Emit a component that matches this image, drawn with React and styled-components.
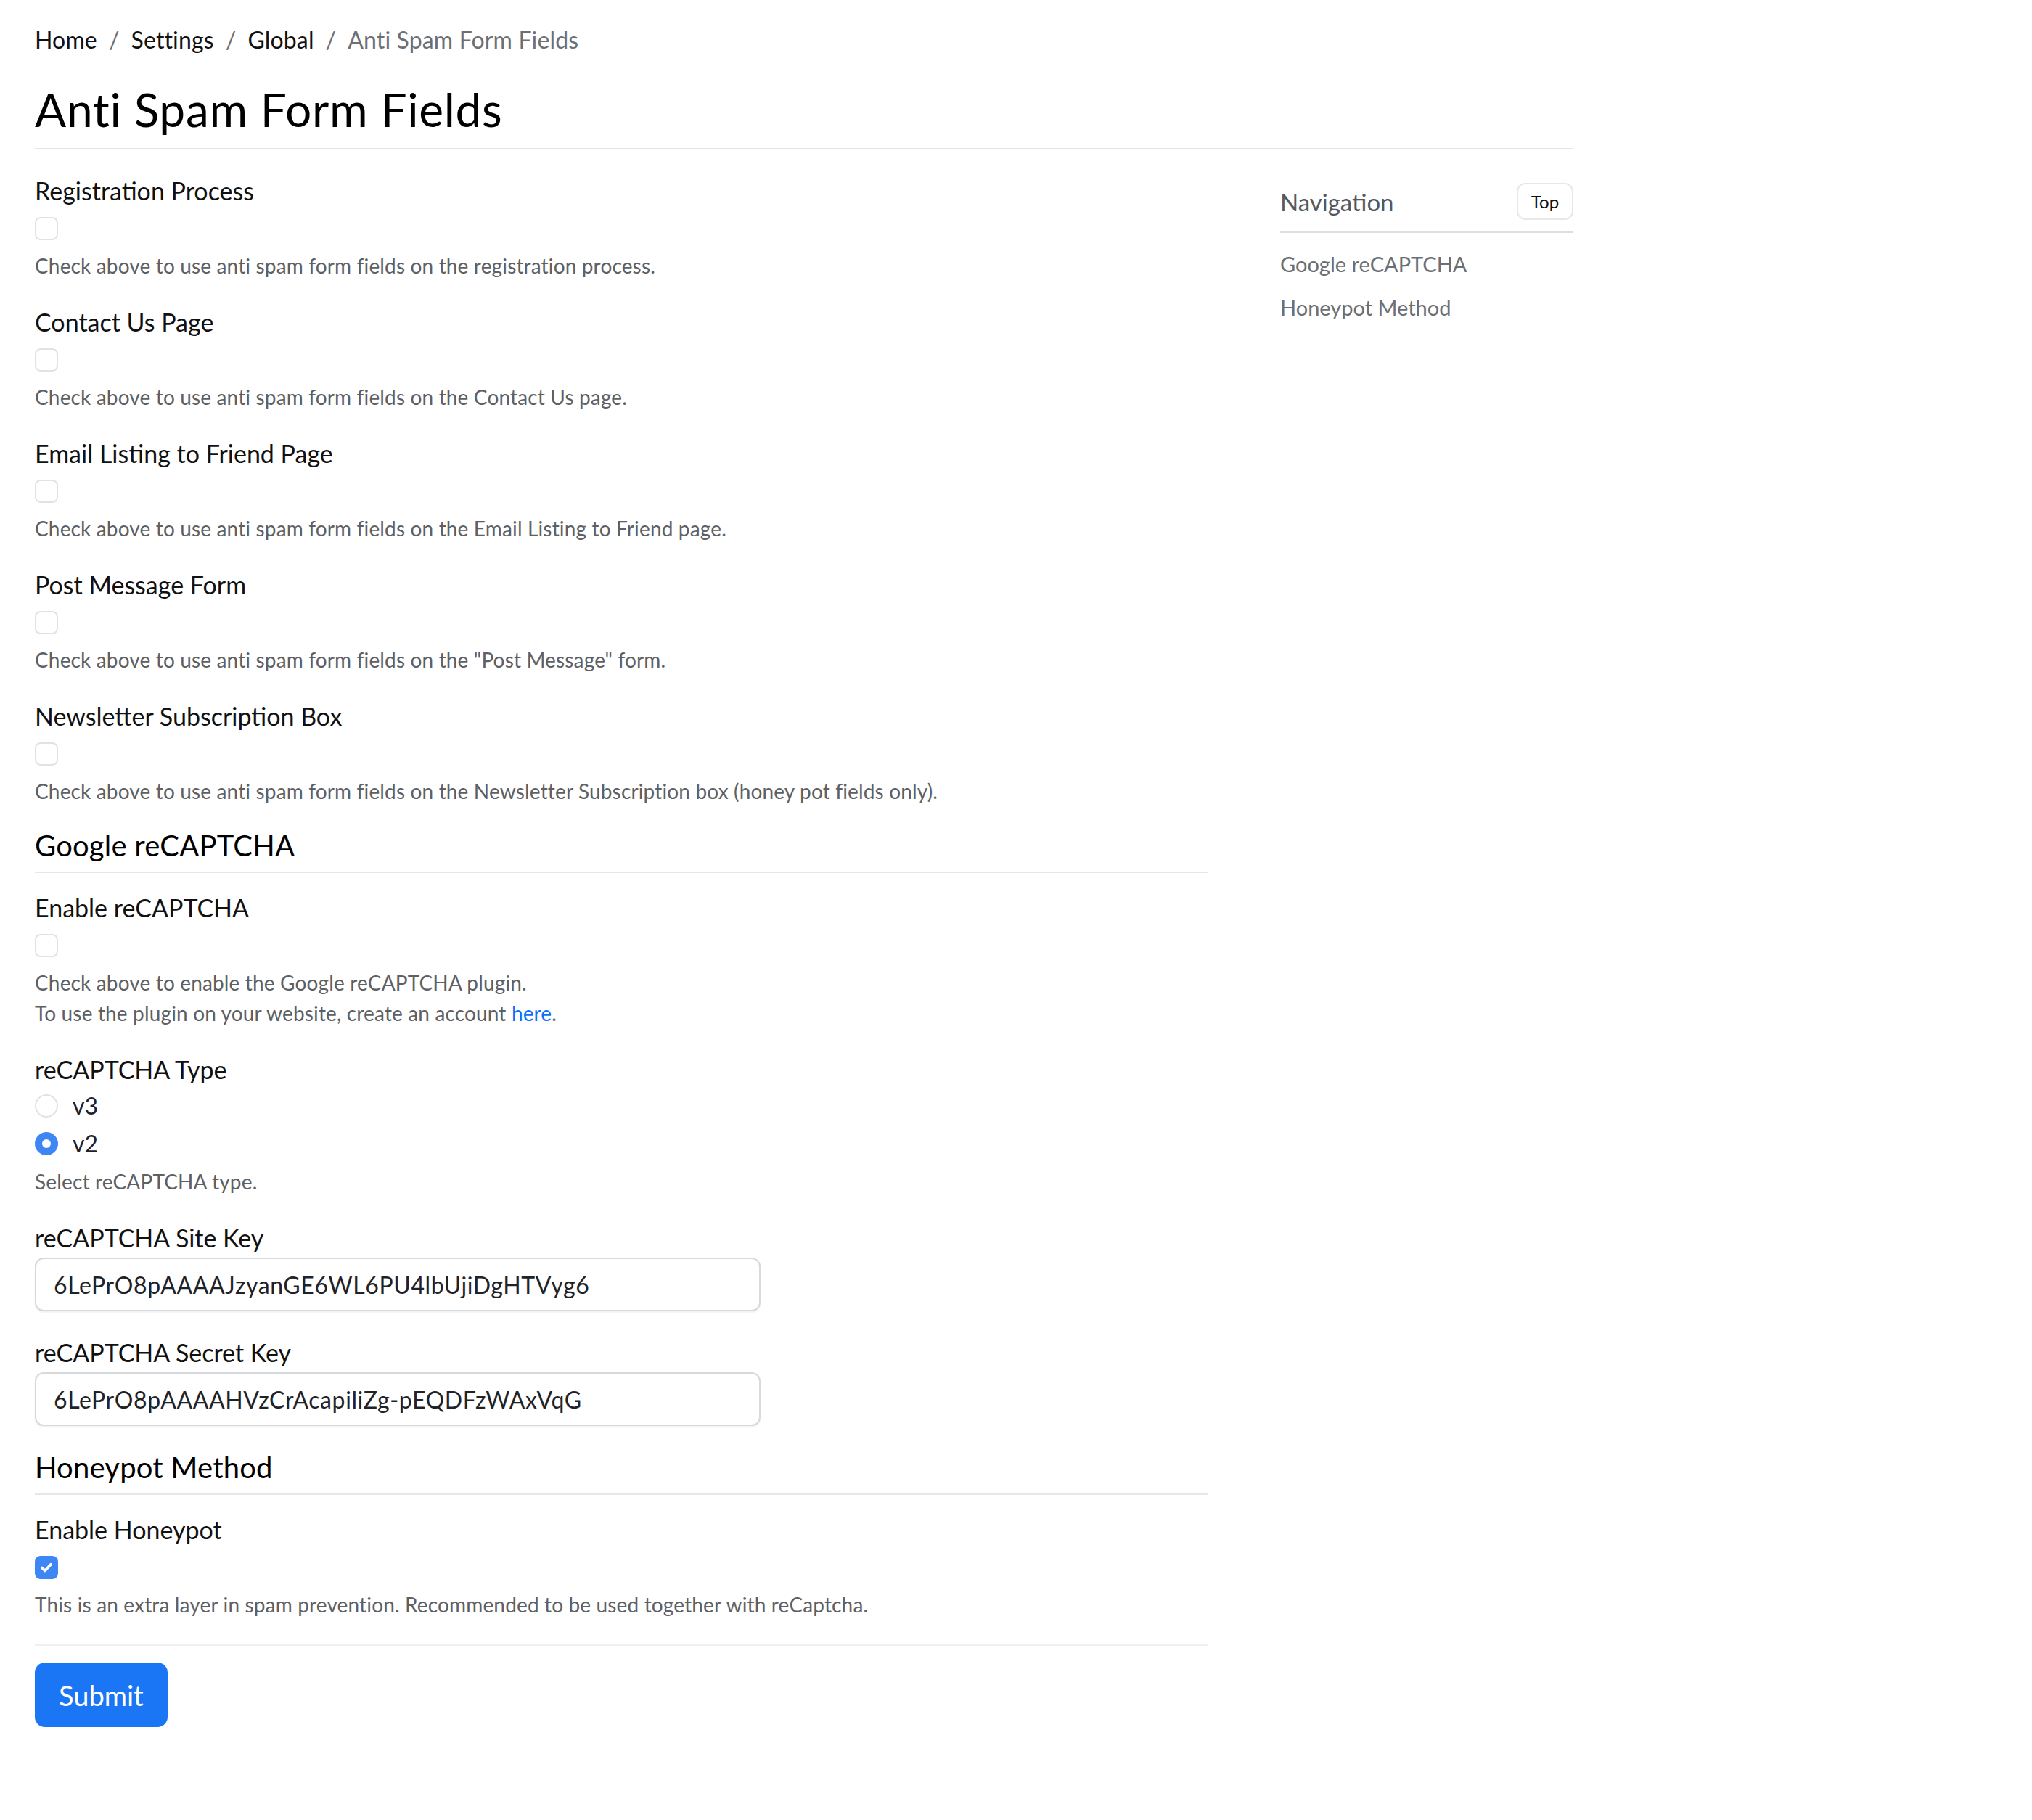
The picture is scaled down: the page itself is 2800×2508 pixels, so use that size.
import React from 'react'
import styled, { createGlobalStyle } from 'styled-components'

const GlobalStyle = createGlobalStyle`
    body {
        margin: 0;
        background: #ffffff;
        font-family: "Lato", "Liberation Sans", sans-serif;
        color: #111111;
    }
`

const Page = styled.div`
    width: 2120px;
    padding: 31px 48px 120px;
`

// BREADCRUMB:
const Crumbs = styled.ol`
    display: flex;
    list-style: none;
    margin: 0;
    padding: 0;
    font-size: 32px;
    line-height: 48px;
    letter-spacing: 0.15px;
`

const Crumb = styled.li`
    color: ${props => props.active ? '#6c7074' : '#111111'};

    &:not(:first-child)::before {
        content: '/';
        color: #6c7074;
        padding: 0 16px;
    }
`

const Title = styled.h1`
    margin: 33px 0 0;
    padding-bottom: 15px;
    border-bottom: 2px solid #e4e4e4;
    font-size: 64px;
    line-height: 77px;
    font-weight: 400;
    letter-spacing: 0.7px;
    color: #000000;
`

const Columns = styled.div`
    display: flex;
    gap: 100px;
    align-items: flex-start;
`

const Main = styled.form`
    width: 1616px;
    padding-top: 33px;
`

// FORM PARTS:
const Group = styled.div`
    margin-bottom: ${props => props.last ? '0' : '33px'};
`

const Label = styled.div`
    font-size: 34px;
    line-height: 48px;
    color: #111111;
`

const Help = styled.div`
    margin-top: ${props => props.gap || 14}px;
    font-size: 28px;
    line-height: 42px;
    letter-spacing: 0.15px;
    color: #5d6064;
`

const Link = styled.a`
    color: #0d6efd;
    text-decoration: none;
`

const Box = styled.span`
    display: flex;
    align-items: center;
    justify-content: center;
    box-sizing: border-box;
    width: 32px;
    height: 32px;
    margin-top: 12px;
    border-radius: 8px;
    border: 2px solid ${props => props.checked ? '#3f86f5' : '#dfe2e6'};
    background: ${props => props.checked ? '#3f86f5' : '#ffffff'};
`

const RadioRow = styled.label`
    display: flex;
    align-items: center;
    gap: 20px;
    margin-top: ${props => props.first ? '2px' : '4px'};
    font-size: 32px;
    line-height: 48px;
    color: #1b2130;
`

const RadioDot = styled.span`
    box-sizing: border-box;
    width: 32px;
    height: 32px;
    border-radius: 50%;
    background: #ffffff;
    border: ${props => props.checked ? '10px solid #3f86f5' : '2px solid #dfe2e6'};
`

const TextInput = styled.input`
    display: block;
    box-sizing: border-box;
    width: 1000px;
    height: 74px;
    margin-top: 3px;
    padding: 0 24px;
    border: 2px solid #d6d9dd;
    border-radius: 12px;
    box-shadow: 0 2px 2px rgba(0, 0, 0, 0.05);
    font-family: inherit;
    font-size: 32px;
    letter-spacing: 0.6px;
    color: #1f2328;
    outline: none;
`

const SectionTitle = styled.h4`
    margin: ${props => props.top}px 0 24px;
    padding-bottom: 12px;
    border-bottom: 2px solid #e6e7ea;
    font-size: 40px;
    line-height: 48px;
    font-weight: 400;
    letter-spacing: 0.2px;
    color: #000000;
`

const Footer = styled.div`
    margin-top: 34px;
    padding-top: 23px;
    border-top: 2px solid #f0f0f0;
`

const SubmitButton = styled.button`
    height: 89px;
    padding: 0 33px;
    border: none;
    border-radius: 14px;
    background: #1a76f4;
    color: #ffffff;
    font-family: inherit;
    font-size: 38px;
`

// SIDE NAVIGATION:
const Aside = styled.aside`
    width: 404px;
    padding-top: 46px;
`

const NavHead = styled.div`
    display: flex;
    align-items: center;
    justify-content: space-between;
    padding-bottom: 16px;
    border-bottom: 2px solid #dedede;
`

const NavTitle = styled.div`
    font-size: 33px;
    color: #55595d;
`

const TopButton = styled.button`
    box-sizing: border-box;
    width: 78px;
    height: 51px;
    border: 2px solid #e8e8e8;
    border-radius: 12px;
    background: #ffffff;
    font-family: inherit;
    font-size: 24px;
    color: #111111;
`

const NavList = styled.div`
    display: flex;
    flex-direction: column;
    padding-top: 13px;
`

const NavLink = styled.a`
    padding: 9px 0;
    font-size: 29px;
    line-height: 42px;
    color: #6c6f73;
    text-decoration: none;
`

const CheckMark = () => (
    <svg width="22" height="22" viewBox="0 0 20 20">
        <path d="M4.5 10.5l3.6 3.6 7.4-8" fill="none" stroke="#ffffff" strokeWidth="3.4" strokeLinecap="round" strokeLinejoin="round" />
    </svg>
)

function CheckField({ label, checked, children, last }) {
    return (
        <Group last={last}>
            <Label>{label}</Label>
            <Box checked={checked}>{checked && <CheckMark />}</Box>
            <Help>{children}</Help>
        </Group>
    )
}

const spamFields = [
    ['Registration Process', 'Check above to use anti spam form fields on the registration process.'],
    ['Contact Us Page', 'Check above to use anti spam form fields on the Contact Us page.'],
    ['Email Listing to Friend Page', 'Check above to use anti spam form fields on the Email Listing to Friend page.'],
    ['Post Message Form', 'Check above to use anti spam form fields on the "Post Message" form.'],
    ['Newsletter Subscription Box', 'Check above to use anti spam form fields on the Newsletter Subscription box (honey pot fields only).'],
]

function App() {
    return (
        <Page>
            <GlobalStyle />

            <Crumbs>
                <Crumb>Home</Crumb>
                <Crumb>Settings</Crumb>
                <Crumb>Global</Crumb>
                <Crumb active>Anti Spam Form Fields</Crumb>
            </Crumbs>

            <Title>Anti Spam Form Fields</Title>

            <Columns>
                <Main>
                    {spamFields.map(([label, help], i) => (
                        <CheckField key={label} label={label} last={i === spamFields.length - 1}>{help}</CheckField>
                    ))}

                    <SectionTitle top={30}>Google reCAPTCHA</SectionTitle>

                    <CheckField label="Enable reCAPTCHA">
                        Check above to enable the Google reCAPTCHA plugin.<br />
                        To use the plugin on your website, create an account <Link href="#">here</Link>.
                    </CheckField>

                    <Group>
                        <Label>reCAPTCHA Type</Label>
                        <RadioRow first><RadioDot />v3</RadioRow>
                        <RadioRow><RadioDot checked />v2</RadioRow>
                        <Help gap={7}>Select reCAPTCHA type.</Help>
                    </Group>

                    <Group>
                        <Label>reCAPTCHA Site Key</Label>
                        <TextInput readOnly value="6LePrO8pAAAAJzyanGE6WL6PU4lbUjiDgHTVyg6" />
                    </Group>

                    <Group last>
                        <Label>reCAPTCHA Secret Key</Label>
                        <TextInput readOnly value="6LePrO8pAAAAHVzCrAcapiliZg-pEQDFzWAxVqG" />
                    </Group>

                    <SectionTitle top={33}>Honeypot Method</SectionTitle>

                    <CheckField label="Enable Honeypot" checked last>
                        This is an extra layer in spam prevention. Recommended to be used together with reCaptcha.
                    </CheckField>

                    <Footer>
                        <SubmitButton type="button">Submit</SubmitButton>
                    </Footer>
                </Main>

                <Aside>
                    <NavHead>
                        <NavTitle>Navigation</NavTitle>
                        <TopButton type="button">Top</TopButton>
                    </NavHead>
                    <NavList>
                        <NavLink href="#">Google reCAPTCHA</NavLink>
                        <NavLink href="#">Honeypot Method</NavLink>
                    </NavList>
                </Aside>
            </Columns>
        </Page>
    )
}

export default App
